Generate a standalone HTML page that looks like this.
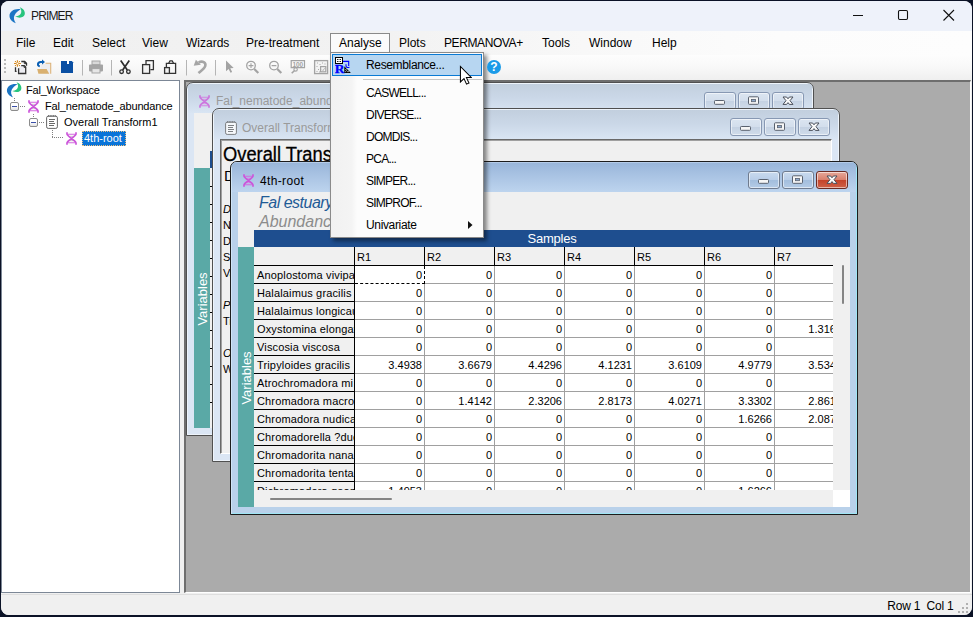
<!DOCTYPE html>
<html><head><meta charset="utf-8"><title>PRIMER</title>
<style>
*{box-sizing:border-box;margin:0;padding:0}
html,body{width:973px;height:617px;overflow:hidden;background:#0b1226}
body{font-family:"Liberation Sans",sans-serif;font-size:12px;color:#000;position:relative}
.abs{position:absolute}
#win{position:absolute;left:1px;top:1px;width:971px;height:614px;background:#f0f0f0;border-radius:8px;overflow:hidden}
#title{position:absolute;left:0;top:0;width:971px;height:30px;background:#eef2fa}
#title .t{position:absolute;left:30px;top:8px;font-size:12px;letter-spacing:-0.850px;color:#1a1a1a}
#menubar{position:absolute;left:0;top:30px;width:971px;height:24px;background:linear-gradient(90deg,#f0f0f0 0,#f2f2f2 40%,#f8f8f8 60%,#fcfcfc 80%,#fdfdfd 100%)}
#menubar span{position:absolute;top:5px;font-size:12px;white-space:nowrap}
#toolbar{position:absolute;left:0;top:54px;width:971px;height:25px;background:linear-gradient(#fdfdfd,#f9f9f9 45%,#efefef 100%)}
#left{position:absolute;left:0;top:79px;width:179px;height:513px;background:#fff;border:1px solid #7c8796}
#mdi{position:absolute;left:183px;top:79px;width:787px;height:513px;background:#ababab;border-top:2px solid #6e6e6e;border-left:2px solid #6e6e6e;border-right:1px solid #fff;border-bottom:1px solid #fff;overflow:hidden}
#status{position:absolute;left:0;top:593px;width:971px;height:22px;background:#f0f0f0}
.tree{font-size:11px;position:absolute;white-space:nowrap}
.exp{position:absolute;width:9px;height:9px;border:1px solid #8c8c8c;border-radius:2px;background:linear-gradient(#fff 40%,#e2e2e2)}
.exp:after{content:"";position:absolute;left:1px;top:3px;width:5px;height:1px;background:#3a4fa8}
.dv{position:absolute;width:1px;background-image:linear-gradient(#808080 50%,transparent 50%);background-size:1px 2px}
.dh{position:absolute;height:1px;background-image:linear-gradient(90deg,#808080 50%,transparent 50%);background-size:2px 1px}
.tsep{position:absolute;top:6px;width:1px;height:15px;background:#b4b4b4}
/* child windows */
.cw{position:absolute;width:628px;height:354px;border:1px solid #3c3c3c;border-radius:7px 7px 0 0;overflow:hidden}
.cw.active{border-color:#1c1c1c;background:#b9d1ea;box-shadow:inset -1px 0 0 #9fe6f5,inset 1px 0 0 #cfe4f6,inset 0 -1px 0 #9fe6f5}
.cw.inactive{background:#dbe6f4;border-color:#505050;box-shadow:inset 0 0 0 1px #eef4fb}
.ct{position:absolute;left:1px;top:0;width:624px;height:30px}
.active .ct{box-shadow:inset 0 1px 0 #b4cbe8}
.inactive .ct{top:1px;height:29px}
.active .ct{background:linear-gradient(#98b5d9,#a9c3e3 45%,#bdd4ee 100%)}
.inactive .ct{background:linear-gradient(#c2cfde,#cbd8e8 50%,#d9e5f3 100%)}
.ctt{position:absolute;left:28px;top:11px;font-size:12px;white-space:nowrap}
.inactive .ctt{color:#9a9a9a}
.active .ctt{top:12px;letter-spacing:0.350px}
.active .wb{top:9px}
.active .ct>svg{margin-top:1px}
.wb{position:absolute;top:8px;width:32px;height:18px;border:1px solid #6f7b8e;border-radius:3px;background:linear-gradient(#c9daee 0,#b9cee8 48%,#a3bedd 52%,#b4cbe6 100%);box-shadow:inset 0 0 0 1px rgba(255,255,255,.55)}
.wb svg{position:absolute;left:-1px;top:-1px}
.inactive .wb{background:linear-gradient(#dbe5f1 0,#d3deec 48%,#c5d2e3 52%,#d0dcea 100%);border-color:#8798b3}
.inactive .wb svg{opacity:1}
.wb.cl.act{background:linear-gradient(#e7a99a 0,#d9806d 48%,#c4432a 52%,#cf6148 100%);border-color:#6b2a22}
.cc{position:absolute;left:7px;top:30px;width:612px;height:315px;background:#f0f0f0;overflow:hidden}
.t1{position:absolute;left:21px;top:2px;font-size:16px;letter-spacing:-0.5px;font-style:italic;color:#1f5b96;white-space:nowrap}
.t2{position:absolute;left:21px;top:21px;font-size:16px;font-style:italic;color:#8c8c8c;white-space:nowrap}
.band{position:absolute;left:16px;top:38px;width:596px;height:17px;background:#1e4e8f;color:#fff;font-size:13px;text-align:center;line-height:18px;letter-spacing:-0.2px}
.teal{position:absolute;left:0;top:55px;width:16px;height:260px;background:#5aa9a6}
.teal span{position:absolute;left:8px;top:131px;color:#fff;font-size:13px;transform:translate(-50%,-50%) rotate(-90deg);white-space:nowrap}
.grid{position:absolute;left:16px;top:55px;width:579px;height:243px;background:#fff;overflow:hidden;font-size:11px}
.hrow,.row{position:absolute;left:0;height:18px;width:700px;white-space:nowrap}
.hrow{top:0;height:19px}
.lab{position:absolute;left:0;top:0;width:101px;height:18px;background:#f0f0f0;border-right:1px solid #000;border-bottom:1px solid #000;padding:3px 0 0 3px;overflow:hidden;white-space:nowrap;letter-spacing:0.150px}
.lab.hd{height:19px}
.ch{position:absolute;top:0;width:70px;height:19px;background:#f0f0f0;border-right:1px solid #000;border-bottom:1px solid #000;padding:4px 0 0 2px}
.c{position:absolute;top:0;width:70px;height:18px;background:#fff;border-right:1px solid #a0a0a0;border-bottom:1px solid #a0a0a0;text-align:right;padding:3px 2px 0 0}
.c.sel{border-right:1px dashed #000;border-bottom:1px dashed #000}
.hs{position:absolute;left:16px;top:298px;width:579px;height:17px;background:#f0f0f0}
.hs i{position:absolute;left:16px;top:8px;width:122px;height:2px;background:#858585;border-radius:1px}
.vs{position:absolute;left:595px;top:55px;width:17px;height:243px;background:#f0f0f0}
.vs i{position:absolute;left:9px;top:18px;width:2px;height:39px;background:#858585;border-radius:1px}
.corner{position:absolute;left:595px;top:298px;width:17px;height:17px;background:#fff}
.cc.doc{background:#f0f0f0;border:1px solid #696969;border-right-color:#fff;border-bottom-color:#fff;box-shadow:inset 1px 1px 0 #a0a0a0}
.d1{position:absolute;left:2px;top:3px;font-size:20px;white-space:nowrap;transform:scaleX(.915);transform-origin:0 0;-webkit-text-stroke:0.300px #000}
.d2{position:absolute;left:3px;top:27px;font-size:15px;white-space:nowrap}
.dl{position:absolute;left:2px;font-size:11px;white-space:nowrap}
/* dropdown */
#mtab{position:absolute;left:329px;top:32px;width:60px;height:21px;background:#fbfbfb;border:1px solid #8a8a8a;border-bottom:none}
#drop{position:absolute;left:329px;top:51px;width:154px;height:186px;background:#fcfcfc;border:1px solid #8a8a8a;box-shadow:3px 3px 4px rgba(0,0,0,.45);z-index:20}
#drop .gut{position:absolute;left:0;top:0;width:26px;height:184px;background:linear-gradient(90deg,#f1f1f1,#f4f4f4 80%,#fcfcfc)}
#drop .it{position:absolute;left:35px;font-size:12px;white-space:nowrap;letter-spacing:-0.75px}
#drop .it.lc{letter-spacing:-0.350px}
#drop .hl{position:absolute;left:1px;top:1px;width:150px;height:22px;background:#b7d6f1;border:1px solid #0a7ad4}
#drop .sep{position:absolute;left:32px;top:26px;width:119px;height:1px;background:#c6c6c6}
</style></head><body>
<div id="win">
<div id="title"><svg class="abs" style="left:7px;top:6px" width="18" height="17" viewBox="0 0 17 17"><path d="M12.2 2.3C6.5 1.2 0.8 4.2 1 9.2C1.2 12.6 4.5 15.2 7.3 16.2C5.6 13.6 4.6 10.8 6.2 8C7.4 5.6 9.8 3.8 12.2 2.3Z" fill="#1b75c4"/><path d="M11.2 0.2C14.8 1.2 17 4.4 16.2 7.6C15.4 10.4 11.6 11.8 6.6 9.6C10.4 9.2 12.8 7.4 12.8 4.6C12.8 3 12.2 1.4 11.2 0.2Z" fill="#27c47e"/></svg><span class="t">PRIMER</span>
<svg class="abs" style="left:850px;top:7px" width="110" height="14" viewBox="0 0 110 14"><path d="M2 7.5h10" stroke="#111" stroke-width="1.1"/><rect x="47.5" y="2.5" width="9" height="9" rx="1.2" fill="none" stroke="#111" stroke-width="1.1"/><path d="M92.500 2l10.500 10.500m0-10.500l-10.500 10.500" stroke="#111" stroke-width="1.100"/></svg>
</div>
<div id="menubar">
<span style="left:15px">File</span><span style="left:52px">Edit</span><span style="left:91px">Select</span><span style="left:141px">View</span><span style="left:185px">Wizards</span><span style="left:245px">Pre-treatment</span><span style="left:398px">Plots</span><span style="left:443px;letter-spacing:-0.4px">PERMANOVA+</span><span style="left:541px">Tools</span><span style="left:588px">Window</span><span style="left:651px">Help</span>
</div>
<div id="toolbar">
<svg class="abs" style="left:-1px;top:0" width="340" height="25" viewBox="0 55 340 25">
<g fill="#b9b9b9"><rect x="4" y="59" width="2" height="2"/><rect x="4" y="63" width="2" height="2"/><rect x="4" y="67" width="2" height="2"/><rect x="4" y="71" width="2" height="2"/></g>
<!-- new -->
<g fill="none" stroke="#333" stroke-width="1.300"><path d="M21.300 61.500h3.400l1.800 1.800v2.500"/><path d="M24.300 61.600v2h2" stroke-width="1"/><path d="M15.500 67.300v4.100h1.100"/><path d="M21.200 65.600h3l1.500 1.500v6.400h-7.100v-5.200" fill="#ececf1"/><path d="M24 65.700v1.600h1.700" stroke-width="1"/></g>
<g stroke="#d98a1c" stroke-width="1.100"><path d="M17.400 60.200v1.900M17.400 64.900v1.900M14 63.500h2M18.800 63.500h2.100"/></g><g fill="#d98a1c"><rect x="14.900" y="61" width="1.100" height="1.100"/><rect x="18.900" y="61" width="1.100" height="1.100"/><rect x="14.900" y="65" width="1.100" height="1.100"/><rect x="18.900" y="65" width="1.100" height="1.100"/></g><circle cx="17.400" cy="63.500" r="1.150" fill="#fff" stroke="#d98a1c" stroke-width="0.900"/>
<!-- open -->
<path d="M40.500 64h9.700v9.700H40.500z" fill="#ededf0"/><path d="M45.500 63.300h5.200v10.400" fill="none" stroke="#dcb37a" stroke-width="1.100"/><path d="M37.200 69h9.400l2.600 4.700H38.400z" fill="#d9b070"/>
<path d="M39.800 66.400c-2.600-0.600-2.600-3.800 0.800-4.300h2.200" fill="none" stroke="#0a5fb4" stroke-width="2"/><path d="M42 59.600l3 2.500-3 2.500z" fill="#0a5fb4"/>
<!-- save -->
<path d="M61 61h10.800l1.200 1.200v10.800H61z" fill="#0a4fa3"/><rect x="67" y="61" width="2" height="3" fill="#fff"/>
<path d="M82.5 60v15.5M111.5 60v15.5M186.5 60v15.5M215.5 60v15.5" stroke="#b5b5b5" stroke-width="1"/>
<!-- print -->
<rect x="89" y="64.6" width="14" height="6.8" rx="0.8" fill="#a5a5a5"/><rect x="92" y="61" width="8" height="3.6" fill="#d9d9d9" stroke="#a5a5a5" stroke-width="1"/><rect x="92" y="68.6" width="8" height="4.4" fill="#e6e6e6" stroke="#a5a5a5" stroke-width="1"/>
<!-- cut -->
<g fill="none" stroke="#2e2e2e" stroke-width="1.700"><path d="M120.700 60.400l6.600 9.600M129.300 60.400l-6.600 9.600"/><circle cx="121.600" cy="71.700" r="1.800" stroke-width="1.300"/><circle cx="128.400" cy="71.700" r="1.800" stroke-width="1.300"/></g>
<!-- copy -->
<g fill="none" stroke="#333" stroke-width="1.3"><path d="M146 64.5v-3.800h7.400v9h-3"/><rect x="142.6" y="64.6" width="7" height="8.800" fill="#f2f2f2"/></g>
<!-- paste -->
<g fill="none" stroke="#333" stroke-width="1.3"><path d="M166.400 67v-3.700h9.200v10h-6"/><path d="M168.700 63.200l1.300-2.400h2.200l1.300 2.400"/><rect x="164.600" y="67.600" width="4.800" height="5.800" fill="#f2f2f2"/></g>
<!-- undo -->
<path d="M198.600 62.400C202.500 60.400 206.300 62.600 205.200 66.200C204.300 69 201 70.800 198.400 73" fill="none" stroke="#a6a6a6" stroke-width="2.600"/><path d="M193.700 65.700l2.200-6 5 5z" fill="#a6a6a6"/>
<!-- pointer -->
<path d="M226 60.500v10.800l2.600-2.400 1.900 3.800 1.700-0.800-1.900-3.700 3.400-0.200z" fill="#a3a3a3"/>
<!-- zoom in/out -->
<g fill="none" stroke="#a3a3a3"><circle cx="251" cy="65.600" r="4.300" stroke-width="1.300"/><path d="M248.600 65.600h4.800M251 63.200v4.800" stroke-width="1.100"/><path d="M254.300 69l4 4" stroke-width="2.200"/>
<circle cx="274" cy="65.600" r="4.300" stroke-width="1.300"/><path d="M271.600 65.600h4.800" stroke-width="1.100"/><path d="M277.300 69l4 4" stroke-width="2.200"/>
<path d="M291.200 60.600h13.300v7h-13.300z" stroke-width="1.200"/><circle cx="295.600" cy="69.400" r="1.700" stroke-width="1.100"/><path d="M294.300 70.700l-2.600 2.600" stroke-width="1.600"/>
<rect x="314.600" y="60.600" width="13" height="13" stroke-width="1.300" fill="#f3f3f3"/><rect x="320.600" y="66.600" width="5.200" height="5.200" stroke-width="1.200"/><path d="M322 69.600l1 1 1.600-2.400" stroke-width="0.800"/></g>
<text x="292.600" y="66.600" font-family="Liberation Sans, sans-serif" font-size="6.500" font-weight="bold" fill="#a3a3a3" letter-spacing="-0.2">100</text>
<g fill="#a9a9a9"><rect x="317" y="62.500" width="1" height="1"/><rect x="319.500" y="64" width="1" height="1"/><rect x="322" y="62.500" width="1" height="1"/><rect x="324.500" y="63.500" width="1" height="1"/><rect x="316.500" y="66" width="1" height="1"/><rect x="318" y="69" width="1" height="1"/><rect x="316.500" y="71" width="1" height="1"/><rect x="319" y="71.500" width="1" height="1"/></g>
</svg>
<svg class="abs" style="left:484px;top:4px;z-index:30" width="18" height="18" viewBox="0 0 18 18"><circle cx="9" cy="8" r="7" fill="#1b9be8"/><text x="9" y="12.200" text-anchor="middle" font-family="Liberation Sans, sans-serif" font-size="12" font-weight="bold" fill="#fff">?</text></svg>

</div>
<div id="left">
<svg class="abs" style="left:4px;top:1px" width="16" height="16" viewBox="0 0 17 17"><path d="M12.2 2.3C6.5 1.2 0.8 4.2 1 9.2C1.2 12.6 4.5 15.2 7.3 16.2C5.6 13.6 4.6 10.8 6.2 8C7.4 5.6 9.8 3.8 12.2 2.3Z" fill="#1b75c4"/><path d="M11.2 0.2C14.8 1.2 17 4.4 16.2 7.6C15.4 10.4 11.6 11.8 6.6 9.6C10.4 9.2 12.8 7.4 12.8 4.6C12.8 3 12.2 1.4 11.2 0.2Z" fill="#27c47e"/></svg>
<div class="dv" style="left:12px;top:17px;height:4px"></div>
<div class="exp" style="left:8px;top:21px"></div><div class="dh" style="left:18px;top:25px;width:6px"></div>
<svg class="abs" style="left:26px;top:19px;opacity:1" width="11" height="13" viewBox="0 0 11 13"><path d="M4 4.300h3.500M3.600 8.700h3.500" stroke="#c9c9c9" stroke-width="1" fill="none"/><path d="M2 2.300h7M2 10.700h7" stroke="#d468e0" stroke-width="1.100" fill="none"/><path d="M1 0.300V2C1 4.400 10 8.600 10 11V12.700M10 0.300V2C10 4.400 1 8.600 1 11V12.700" stroke="#cc55da" stroke-width="1.700" fill="none"/></svg>
<span class="tree" style="left:24px;top:3px;letter-spacing:-0.200px">Fal_Workspace</span>
<span class="tree" style="left:43px;top:19px;letter-spacing:-0.15px">Fal_nematode_abundance</span>
<div class="dv" style="left:31px;top:33px;height:4px"></div>
<div class="exp" style="left:27px;top:37px"></div><div class="dh" style="left:37px;top:41px;width:6px"></div>
<svg class="abs" style="left:44px;top:34px;opacity:1" width="12" height="14" viewBox="0 0 12 14"><rect x="0.6" y="1.2" width="10.8" height="12.2" rx="1.6" fill="#fff" stroke="#666" stroke-width="1"/><path d="M2 0.9h8" stroke="#5c5c5c" stroke-width="1.4" stroke-dasharray="1 0.7"/><path d="M3 4.5h6M3 6.5h5M3 8.5h6M3 10.5h5" stroke="#6a6a6a" stroke-width="1"/></svg>
<span class="tree" style="left:62px;top:35px">Overall Transform1</span>
<div class="dv" style="left:50px;top:49px;height:8px"></div><div class="dh" style="left:50px;top:56px;width:12px"></div>
<svg class="abs" style="left:64px;top:51px;opacity:1" width="11" height="13" viewBox="0 0 11 13"><path d="M4 4.300h3.500M3.600 8.700h3.500" stroke="#c9c9c9" stroke-width="1" fill="none"/><path d="M2 2.300h7M2 10.700h7" stroke="#d468e0" stroke-width="1.100" fill="none"/><path d="M1 0.300V2C1 4.400 10 8.600 10 11V12.700M10 0.300V2C10 4.400 1 8.600 1 11V12.700" stroke="#cc55da" stroke-width="1.700" fill="none"/></svg>
<span class="tree" style="left:80px;top:50px;height:15px;background:#0a74d8;color:#fff;padding:1px 4px 0 2px;outline:1px dotted #f0c080;outline-offset:-1px">4th-root</span>
</div>
<div id="mdi"><div class="cw inactive" style="left:0px;top:0px;z-index:1">
<div class="ct"><svg class="abs" style="left:11px;top:11px;opacity:0.75" width="11" height="13" viewBox="0 0 11 13"><path d="M4 4.300h3.500M3.600 8.700h3.500" stroke="#dc7fe6" stroke-width="1" fill="none"/><path d="M2 2.300h7M2 10.700h7" stroke="#d468e0" stroke-width="1.100" fill="none"/><path d="M1 0.300V2C1 4.400 10 8.600 10 11V12.700M10 0.300V2C10 4.400 1 8.600 1 11V12.700" stroke="#cc55da" stroke-width="1.700" fill="none"/></svg><span class="ctt" style="top:10px">Fal_nematode_abundance</span><div class="wb" style="left:516px"><svg width="32" height="18" viewBox="0 0 32 18"><rect x="10.500" y="8.500" width="10" height="3.800" rx="0.800" fill="#f6f6f6" stroke="#59616e" stroke-width="1"/></svg></div><div class="wb" style="left:550px"><svg width="32" height="18" viewBox="0 0 32 18"><rect x="10.500" y="4.800" width="10" height="7.500" rx="0.800" fill="#f6f6f6" stroke="#59616e" stroke-width="1"/><rect x="13.500" y="7.400" width="4" height="2.300" fill="#8fa9cc" stroke="#59616e" stroke-width="0.800"/></svg></div><div class="wb cl" style="left:584px"><svg width="32" height="18" viewBox="0 0 32 18"><path d="M11 5h3.600l1.400 1.800 1.400-1.800h3.600l-3 3.700 3 3.700h-3.600l-1.400-1.800-1.400 1.800h-3.600l3-3.700z" fill="#fafafa" stroke="#4a505c" stroke-width="1" stroke-linejoin="miter"/></svg></div></div>
<div class="cc">
<div class="t1">Fal estuary nematodes</div><div class="t2">Abundance</div>
<div class="band">Samples</div>
<div class="teal"><span>Variables</span></div>
<div class="grid"><div class="hrow"><div class="lab hd"></div><div class="ch" style="left:101px">R1</div><div class="ch" style="left:171px">R2</div><div class="ch" style="left:241px">R3</div><div class="ch" style="left:311px">R4</div><div class="ch" style="left:381px">R5</div><div class="ch" style="left:451px">R6</div><div class="ch" style="left:521px">R7</div></div><div class="row" style="top:19px"><div class="lab">Anoplostoma vivipa</div><div class="c" style="left:101px">0</div><div class="c" style="left:171px">0</div><div class="c" style="left:241px">0</div><div class="c" style="left:311px">0</div><div class="c" style="left:381px">0</div><div class="c" style="left:451px">0</div><div class="c" style="left:521px"></div></div><div class="row" style="top:37px"><div class="lab">Halalaimus gracilis</div><div class="c" style="left:101px">0</div><div class="c" style="left:171px">0</div><div class="c" style="left:241px">0</div><div class="c" style="left:311px">0</div><div class="c" style="left:381px">0</div><div class="c" style="left:451px">0</div><div class="c" style="left:521px"></div></div><div class="row" style="top:55px"><div class="lab">Halalaimus longicau</div><div class="c" style="left:101px">0</div><div class="c" style="left:171px">0</div><div class="c" style="left:241px">0</div><div class="c" style="left:311px">0</div><div class="c" style="left:381px">0</div><div class="c" style="left:451px">0</div><div class="c" style="left:521px"></div></div><div class="row" style="top:73px"><div class="lab">Oxystomina elongat</div><div class="c" style="left:101px">0</div><div class="c" style="left:171px">0</div><div class="c" style="left:241px">0</div><div class="c" style="left:311px">0</div><div class="c" style="left:381px">0</div><div class="c" style="left:451px">0</div><div class="c" style="left:521px">1.3161</div></div><div class="row" style="top:91px"><div class="lab">Viscosia viscosa</div><div class="c" style="left:101px">0</div><div class="c" style="left:171px">0</div><div class="c" style="left:241px">0</div><div class="c" style="left:311px">0</div><div class="c" style="left:381px">0</div><div class="c" style="left:451px">0</div><div class="c" style="left:521px"></div></div><div class="row" style="top:109px"><div class="lab">Tripyloides gracilis</div><div class="c" style="left:101px">3.4938</div><div class="c" style="left:171px">3.6679</div><div class="c" style="left:241px">4.4296</div><div class="c" style="left:311px">4.1231</div><div class="c" style="left:381px">3.6109</div><div class="c" style="left:451px">4.9779</div><div class="c" style="left:521px">3.5341</div></div><div class="row" style="top:127px"><div class="lab">Atrochromadora mi</div><div class="c" style="left:101px">0</div><div class="c" style="left:171px">0</div><div class="c" style="left:241px">0</div><div class="c" style="left:311px">0</div><div class="c" style="left:381px">0</div><div class="c" style="left:451px">0</div><div class="c" style="left:521px"></div></div><div class="row" style="top:145px"><div class="lab">Chromadora macrol</div><div class="c" style="left:101px">0</div><div class="c" style="left:171px">1.4142</div><div class="c" style="left:241px">2.3206</div><div class="c" style="left:311px">2.8173</div><div class="c" style="left:381px">4.0271</div><div class="c" style="left:451px">3.3302</div><div class="c" style="left:521px">2.8612</div></div><div class="row" style="top:163px"><div class="lab">Chromadora nudica</div><div class="c" style="left:101px">0</div><div class="c" style="left:171px">0</div><div class="c" style="left:241px">0</div><div class="c" style="left:311px">0</div><div class="c" style="left:381px">0</div><div class="c" style="left:451px">1.6266</div><div class="c" style="left:521px">2.0871</div></div><div class="row" style="top:181px"><div class="lab">Chromadorella ?duo</div><div class="c" style="left:101px">0</div><div class="c" style="left:171px">0</div><div class="c" style="left:241px">0</div><div class="c" style="left:311px">0</div><div class="c" style="left:381px">0</div><div class="c" style="left:451px">0</div><div class="c" style="left:521px"></div></div><div class="row" style="top:199px"><div class="lab">Chromadorita nana</div><div class="c" style="left:101px">0</div><div class="c" style="left:171px">0</div><div class="c" style="left:241px">0</div><div class="c" style="left:311px">0</div><div class="c" style="left:381px">0</div><div class="c" style="left:451px">0</div><div class="c" style="left:521px"></div></div><div class="row" style="top:217px"><div class="lab">Chromadorita tenta</div><div class="c" style="left:101px">0</div><div class="c" style="left:171px">0</div><div class="c" style="left:241px">0</div><div class="c" style="left:311px">0</div><div class="c" style="left:381px">0</div><div class="c" style="left:451px">0</div><div class="c" style="left:521px"></div></div><div class="row" style="top:235px"><div class="lab">Dichromadora geop</div><div class="c" style="left:101px">1.4953</div><div class="c" style="left:171px">0</div><div class="c" style="left:241px">0</div><div class="c" style="left:311px">0</div><div class="c" style="left:381px">0</div><div class="c" style="left:451px">1.6266</div><div class="c" style="left:521px"></div></div></div>
<div class="hs"><i></i></div><div class="vs"><i></i></div><div class="corner"></div>
</div></div><div class="cw inactive" style="left:26px;top:26px;z-index:2">
<div class="ct"><svg class="abs" style="left:11px;top:11px;opacity:0.8" width="12" height="14" viewBox="0 0 12 14"><rect x="0.6" y="1.2" width="10.8" height="12.2" rx="1.6" fill="#fff" stroke="#666" stroke-width="1"/><path d="M2 0.9h8" stroke="#5c5c5c" stroke-width="1.4" stroke-dasharray="1 0.7"/><path d="M3 4.5h6M3 6.5h5M3 8.5h6M3 10.5h5" stroke="#6a6a6a" stroke-width="1"/></svg><span class="ctt">Overall Transform1</span><div class="wb" style="left:516px"><svg width="32" height="18" viewBox="0 0 32 18"><rect x="10.500" y="8.500" width="10" height="3.800" rx="0.800" fill="#f6f6f6" stroke="#59616e" stroke-width="1"/></svg></div><div class="wb" style="left:550px"><svg width="32" height="18" viewBox="0 0 32 18"><rect x="10.500" y="4.800" width="10" height="7.500" rx="0.800" fill="#f6f6f6" stroke="#59616e" stroke-width="1"/><rect x="13.500" y="7.400" width="4" height="2.300" fill="#8fa9cc" stroke="#59616e" stroke-width="0.800"/></svg></div><div class="wb cl" style="left:584px"><svg width="32" height="18" viewBox="0 0 32 18"><path d="M11 5h3.600l1.400 1.800 1.400-1.800h3.600l-3 3.700 3 3.700h-3.600l-1.400-1.800-1.400 1.800h-3.600l3-3.700z" fill="#fafafa" stroke="#4a505c" stroke-width="1" stroke-linejoin="miter"/></svg></div></div>
<div class="cc doc">
<div class="d1">Overall Transform</div>
<div class="d2">Data</div>
<div class="dl" style="top:63px"><i>Data worksheet</i></div>
<div class="dl" style="top:79px">Name: Fal_nematode_abundance</div>
<div class="dl" style="top:95px">Data type: Abundance</div>
<div class="dl" style="top:111px">Sample selection: All</div>
<div class="dl" style="top:127px">Variable selection: All</div>
<div class="dl" style="top:159px"><i>Parameters</i></div>
<div class="dl" style="top:175px">Transform: Fourth root</div>
<div class="dl" style="top:207px"><i>Outputs</i></div>
<div class="dl" style="top:223px">Worksheet: 4th-root</div>
</div></div><div class="cw active" style="left:44px;top:79px;z-index:3">
<div class="ct"><svg class="abs" style="left:11px;top:11px;opacity:1" width="11" height="13" viewBox="0 0 11 13"><path d="M4 4.300h3.500M3.600 8.700h3.500" stroke="#dc7fe6" stroke-width="1" fill="none"/><path d="M2 2.300h7M2 10.700h7" stroke="#d468e0" stroke-width="1.100" fill="none"/><path d="M1 0.300V2C1 4.400 10 8.600 10 11V12.700M10 0.300V2C10 4.400 1 8.600 1 11V12.700" stroke="#cc55da" stroke-width="1.700" fill="none"/></svg><span class="ctt">4th-root</span><div class="wb act" style="left:516px"><svg width="32" height="18" viewBox="0 0 32 18"><rect x="10.500" y="8.500" width="10" height="3.800" rx="0.800" fill="#f6f6f6" stroke="#59616e" stroke-width="1"/></svg></div><div class="wb act" style="left:550px"><svg width="32" height="18" viewBox="0 0 32 18"><rect x="10.500" y="4.800" width="10" height="7.500" rx="0.800" fill="#f6f6f6" stroke="#59616e" stroke-width="1"/><rect x="13.500" y="7.400" width="4" height="2.300" fill="#8fa9cc" stroke="#59616e" stroke-width="0.800"/></svg></div><div class="wb act cl" style="left:584px"><svg width="32" height="18" viewBox="0 0 32 18"><path d="M11 5h3.600l1.400 1.800 1.400-1.800h3.600l-3 3.700 3 3.700h-3.600l-1.400-1.800-1.400 1.800h-3.600l3-3.700z" fill="#fafafa" stroke="#4a505c" stroke-width="1" stroke-linejoin="miter"/></svg></div></div>
<div class="cc">
<div class="t1">Fal estuary nematodes</div><div class="t2">Abundance</div>
<div class="band">Samples</div>
<div class="teal"><span>Variables</span></div>
<div class="grid"><div class="hrow"><div class="lab hd"></div><div class="ch" style="left:101px">R1</div><div class="ch" style="left:171px">R2</div><div class="ch" style="left:241px">R3</div><div class="ch" style="left:311px">R4</div><div class="ch" style="left:381px">R5</div><div class="ch" style="left:451px">R6</div><div class="ch" style="left:521px">R7</div></div><div class="row" style="top:19px"><div class="lab">Anoplostoma vivipa</div><div class="c sel" style="left:101px">0</div><div class="c" style="left:171px">0</div><div class="c" style="left:241px">0</div><div class="c" style="left:311px">0</div><div class="c" style="left:381px">0</div><div class="c" style="left:451px">0</div><div class="c" style="left:521px"></div></div><div class="row" style="top:37px"><div class="lab">Halalaimus gracilis</div><div class="c" style="left:101px">0</div><div class="c" style="left:171px">0</div><div class="c" style="left:241px">0</div><div class="c" style="left:311px">0</div><div class="c" style="left:381px">0</div><div class="c" style="left:451px">0</div><div class="c" style="left:521px"></div></div><div class="row" style="top:55px"><div class="lab">Halalaimus longicau</div><div class="c" style="left:101px">0</div><div class="c" style="left:171px">0</div><div class="c" style="left:241px">0</div><div class="c" style="left:311px">0</div><div class="c" style="left:381px">0</div><div class="c" style="left:451px">0</div><div class="c" style="left:521px"></div></div><div class="row" style="top:73px"><div class="lab">Oxystomina elongat</div><div class="c" style="left:101px">0</div><div class="c" style="left:171px">0</div><div class="c" style="left:241px">0</div><div class="c" style="left:311px">0</div><div class="c" style="left:381px">0</div><div class="c" style="left:451px">0</div><div class="c" style="left:521px">1.3161</div></div><div class="row" style="top:91px"><div class="lab">Viscosia viscosa</div><div class="c" style="left:101px">0</div><div class="c" style="left:171px">0</div><div class="c" style="left:241px">0</div><div class="c" style="left:311px">0</div><div class="c" style="left:381px">0</div><div class="c" style="left:451px">0</div><div class="c" style="left:521px"></div></div><div class="row" style="top:109px"><div class="lab">Tripyloides gracilis</div><div class="c" style="left:101px">3.4938</div><div class="c" style="left:171px">3.6679</div><div class="c" style="left:241px">4.4296</div><div class="c" style="left:311px">4.1231</div><div class="c" style="left:381px">3.6109</div><div class="c" style="left:451px">4.9779</div><div class="c" style="left:521px">3.5341</div></div><div class="row" style="top:127px"><div class="lab">Atrochromadora mi</div><div class="c" style="left:101px">0</div><div class="c" style="left:171px">0</div><div class="c" style="left:241px">0</div><div class="c" style="left:311px">0</div><div class="c" style="left:381px">0</div><div class="c" style="left:451px">0</div><div class="c" style="left:521px"></div></div><div class="row" style="top:145px"><div class="lab">Chromadora macrol</div><div class="c" style="left:101px">0</div><div class="c" style="left:171px">1.4142</div><div class="c" style="left:241px">2.3206</div><div class="c" style="left:311px">2.8173</div><div class="c" style="left:381px">4.0271</div><div class="c" style="left:451px">3.3302</div><div class="c" style="left:521px">2.8612</div></div><div class="row" style="top:163px"><div class="lab">Chromadora nudica</div><div class="c" style="left:101px">0</div><div class="c" style="left:171px">0</div><div class="c" style="left:241px">0</div><div class="c" style="left:311px">0</div><div class="c" style="left:381px">0</div><div class="c" style="left:451px">1.6266</div><div class="c" style="left:521px">2.0871</div></div><div class="row" style="top:181px"><div class="lab">Chromadorella ?duo</div><div class="c" style="left:101px">0</div><div class="c" style="left:171px">0</div><div class="c" style="left:241px">0</div><div class="c" style="left:311px">0</div><div class="c" style="left:381px">0</div><div class="c" style="left:451px">0</div><div class="c" style="left:521px"></div></div><div class="row" style="top:199px"><div class="lab">Chromadorita nana</div><div class="c" style="left:101px">0</div><div class="c" style="left:171px">0</div><div class="c" style="left:241px">0</div><div class="c" style="left:311px">0</div><div class="c" style="left:381px">0</div><div class="c" style="left:451px">0</div><div class="c" style="left:521px"></div></div><div class="row" style="top:217px"><div class="lab">Chromadorita tenta</div><div class="c" style="left:101px">0</div><div class="c" style="left:171px">0</div><div class="c" style="left:241px">0</div><div class="c" style="left:311px">0</div><div class="c" style="left:381px">0</div><div class="c" style="left:451px">0</div><div class="c" style="left:521px"></div></div><div class="row" style="top:235px"><div class="lab">Dichromadora geop</div><div class="c" style="left:101px">1.4953</div><div class="c" style="left:171px">0</div><div class="c" style="left:241px">0</div><div class="c" style="left:311px">0</div><div class="c" style="left:381px">0</div><div class="c" style="left:451px">1.6266</div><div class="c" style="left:521px"></div></div></div>
<div class="hs"><i></i></div><div class="vs"><i></i></div><div class="corner"></div>
</div></div></div>
<div id="status"><div class="abs" style="left:0;top:0;width:971px;height:1px;background:#dedede"></div><span class="abs" style="right:18.500px;top:5px;white-space:pre;letter-spacing:-0.200px">Row 1  Col 1</span>
<svg class="abs" style="left:957px;top:9px" width="12" height="12" viewBox="0 0 12 12"><g fill="#b0b0b0"><rect x="8" y="0" width="2" height="2"/><rect x="4" y="4" width="2" height="2"/><rect x="8" y="4" width="2" height="2"/><rect x="0" y="8" width="2" height="2"/><rect x="4" y="8" width="2" height="2"/><rect x="8" y="8" width="2" height="2"/></g></svg>
</div>
<div id="mtab"><span class="abs" style="left:8px;top:2px;font-size:12px">Analyse</span></div>
<div id="drop"><div class="gut"></div><div class="hl"></div><div class="sep"></div><svg class="abs" style="left:4px;top:3px" width="18" height="18" viewBox="335 56 18 18"><rect x="335" y="57" width="8" height="7" fill="#000"/><rect x="336" y="58" width="6" height="5" fill="#fff"/><g fill="#222"><rect x="337" y="59" width="1" height="1"/><rect x="338.500" y="59" width="1" height="1"/><rect x="340" y="59" width="1" height="1"/><rect x="337" y="61" width="1" height="1"/><rect x="338.500" y="61" width="1" height="1"/><rect x="340" y="61" width="1" height="1"/></g><path d="M343 61.400h5.700v4.600M346 65.800c0 1.400 1 1.800 3.400 1.600M346 65.800v-1.500" fill="none" stroke="#0000ff" stroke-width="1.100"/><text x="334.800" y="72.900" font-family="Liberation Serif, serif" font-size="13.500" font-weight="bold" fill="#0000ff" stroke="#0000ff" stroke-width="0.300">R</text><path d="M344.300 66.300v6.600h6.600z" fill="#000"/><g fill="#fff"><rect x="345.300" y="69.300" width="0.800" height="0.800"/><rect x="346.300" y="70.300" width="0.800" height="0.800"/><rect x="345.300" y="71.300" width="0.800" height="0.800"/><rect x="347.300" y="71.300" width="0.800" height="0.800"/><rect x="346.300" y="68.600" width="0.700" height="0.700"/><rect x="348.300" y="71.300" width="0.800" height="0.800"/></g></svg>
<span class="it lc" style="top:5px">Resemblance...</span>
<span class="it" style="top:33px">CASWELL...</span>
<span class="it" style="top:55px">DIVERSE...</span>
<span class="it" style="top:77px">DOMDIS...</span>
<span class="it" style="top:99px">PCA...</span>
<span class="it" style="top:121px">SIMPER...</span>
<span class="it" style="top:143px">SIMPROF...</span>
<span class="it lc" style="top:165px">Univariate</span>
<svg class="abs" style="left:137px;top:168px" width="5" height="8" viewBox="0 0 5 8"><path d="M0 0L4.5 4L0 8Z" fill="#111"/></svg>
</div>
<svg class="abs" style="left:458px;top:64px;z-index:40" width="13.200" height="20.700" viewBox="0 0 14 22"><path d="M1.500 1.500v16.500l3.800-3.600 2.700 6 2.600-1.200-2.700-5.800h5.300z" fill="#fff" stroke="#000" stroke-width="1.100" stroke-linejoin="miter"/></svg>
</div>
</body></html>
